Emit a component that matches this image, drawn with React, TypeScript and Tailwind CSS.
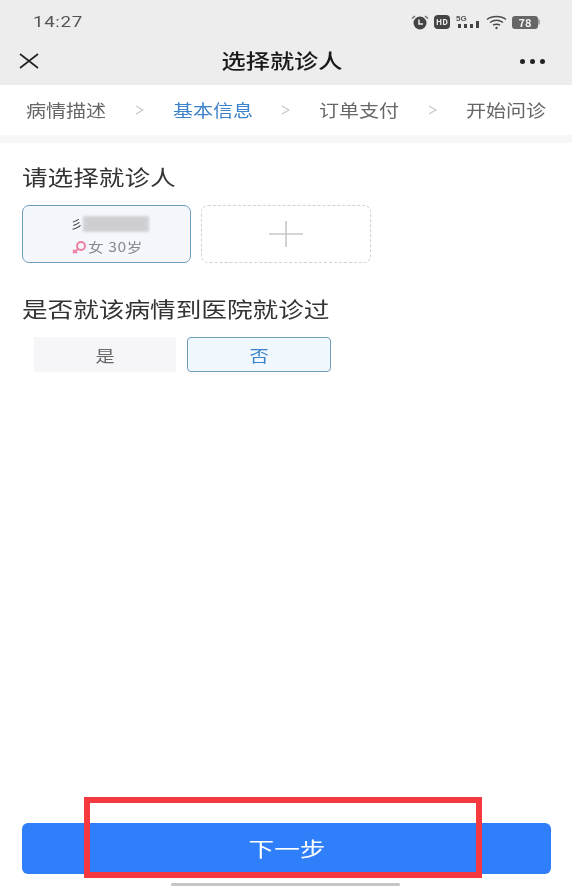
import React from 'react'

const font = { fontFamily: '"Noto Sans CJK SC", "Liberation Sans", sans-serif' }

const steps = ['病情描述', '基本信息', '订单支付', '开始问诊']

function StatusIcons() {
  return (
    <div className="flex items-center text-[#4a4a4a]">
      <svg width="18" height="15" viewBox="0 0 18 15" className="mr-[5px]">
        <circle cx="9" cy="8" r="6.5" fill="#444" />
        <path d="M1 3.5 L4 1 M17 3.5 L14 1" stroke="#666" strokeWidth="1.3" />
        <path d="M8 4.5 V9 H12" stroke="#eee" strokeWidth="1.5" fill="none" />
      </svg>
      <div className="mr-[6px] flex h-[14px] w-[16px] items-center justify-center rounded-[4px] bg-[#444] text-[8px] leading-none font-bold text-[#eee]">
        HD
      </div>
      <svg width="24" height="16" viewBox="0 0 24 16" className="mr-[6px]">
        <text x="0" y="7" fontSize="8" fontWeight="700" fill="#555" fontFamily="Liberation Sans">5G</text>
        <rect x="2" y="10" width="3" height="4" fill="#444" />
        <rect x="8" y="10" width="3" height="4" fill="#444" />
        <rect x="14" y="10" width="3" height="4" fill="#444" />
        <rect x="20" y="7" width="3" height="7" fill="#444" />
      </svg>
      <svg width="21" height="15" viewBox="0 0 21 15" className="mr-[5px]" fill="none" stroke="#4a4a4a" strokeWidth="1.5">
        <path d="M1 4.5 C6 0.5 15 0.5 20 4.5" />
        <path d="M4 7.5 C8 4.8 13 4.8 17 7.5" />
        <path d="M7 10.2 C9 9 12 9 14 10.2" />
        <circle cx="10.5" cy="13" r="1.2" fill="#4a4a4a" stroke="none" />
      </svg>
      <div className="flex items-center">
        <div className="flex h-[13px] w-[26px] items-center justify-center rounded-[3px] bg-[#666] text-[11px] leading-none font-bold text-[#f2f2f2]">
          78
        </div>
        <div className="h-[6px] w-[2px] rounded-r-sm bg-[#aaa]" />
      </div>
    </div>
  )
}

export default function App() {
  return (
    <div className="relative flex h-[887px] w-[572px] flex-col overflow-hidden bg-white blur-[0.5px]" style={font}>
      {/* top bar */}
      <div className="h-[85px] shrink-0 bg-[#ededed]">
        <div className="flex h-[44px] items-center justify-between pr-[32px] pl-[33px]">
          <span className="origin-left scale-x-[1.25] pt-[1px] text-[15px] tracking-[0.5px] text-[#555]" style={{ fontFamily: 'Roboto, sans-serif' }}>14:27</span>
          <StatusIcons />
        </div>
        <div className="flex h-[34px] items-center justify-between pr-[27px] pl-[19px]">
          <svg width="20" height="16" viewBox="0 0 20 16" fill="none" stroke="#222" strokeWidth="1.6">
            <path d="M1 1 L19 15 M19 1 L1 15" />
          </svg>
          <span className="ml-[4px] scale-x-[1.21] text-[20px] font-medium text-[#1a1a1a]">选择就诊人</span>
          <div className="flex gap-[5px]">
            <span className="h-[5px] w-[5px] rounded-full bg-[#222]" />
            <span className="h-[5px] w-[5px] rounded-full bg-[#222]" />
            <span className="h-[5px] w-[5px] rounded-full bg-[#222]" />
          </div>
        </div>
      </div>

      {/* steps */}
      <div className="flex h-[50px] shrink-0 items-start justify-between px-[26px] pt-[11px]">
        {steps.map((s, i) => (
          <React.Fragment key={s}>
            <span className={i === 1
              ? 'flex w-[80px] scale-x-[1.18] justify-center text-[17px] leading-[28px] whitespace-nowrap text-[#3d83c9]'
              : 'flex w-[80px] scale-x-[1.18] justify-center text-[17px] leading-[28px] whitespace-nowrap text-[#666]'}>{s}</span>
            {i < 3 && (
              <svg width="9" height="28" viewBox="0 0 9 28" fill="none" stroke="#c4c4c4" strokeWidth="1.1">
                <path d="M1 10 L8 14 L1 18" />
              </svg>
            )}
          </React.Fragment>
        ))}
      </div>
      <div className="h-[8px] shrink-0 bg-[#f7f7f7]" />

      {/* patient */}
      <div className="flex grow flex-col px-[22px]">
        <h2 className="mt-[19px] origin-left scale-x-[1.22] text-[21px] leading-[28px] font-normal text-[#333]">请选择就诊人</h2>
        <div className="mt-[15px] flex gap-[10px]">
          <div className="flex h-[58px] w-[169px] flex-col items-center rounded-[7px] border border-[#6f9dbf] bg-[#f4f8fd] pt-[8px]">
            <div className="ml-[6px] flex h-[20px] items-center">
              <span className="text-[12px] leading-[20px] text-[#333]">彡</span>
              <div className="h-[16px] w-[66px] bg-[#cfcfd2] blur-[1.5px]" />
            </div>
            <div className="mt-[4px] mr-[8px] flex items-center gap-[1px]">
              <svg width="16" height="14" viewBox="0 0 16 14" fill="none" stroke="#ee7fa0" strokeWidth="2">
                <circle cx="10" cy="6" r="4" />
                <path d="M7 9 L2 13 M2 10 L6 13" />
              </svg>
              <span className="origin-left scale-x-[1.2] text-[13px] leading-[18px] tracking-[0.5px] text-[#888]">女 30岁</span>
            </div>
          </div>
          <div className="flex h-[58px] w-[170px] items-center justify-center rounded-[7px] border border-dashed border-[#d2d2d2]">
            <svg width="34" height="26" viewBox="0 0 34 26" fill="none" stroke="#c8c8c8" strokeWidth="1.6">
              <path d="M0 13 H34 M17 0 V26" />
            </svg>
          </div>
        </div>

        {/* visited hospital */}
        <h2 className="mt-[31px] origin-left scale-x-[1.22] text-[21px] leading-[28px] font-normal whitespace-nowrap text-[#333]">是否就该病情到医院就诊过</h2>
        <div className="mt-[15px] flex gap-[11px] pl-[12px]">
          <div className="flex h-[35px] w-[142px] items-center justify-center bg-[#f6f6f9] text-[#666]">
            <span className="scale-x-[1.2] text-[16px]">是</span>
          </div>
          <div className="flex h-[35px] w-[144px] items-center justify-center rounded-[4px] border border-[#6f9dbf] bg-[#f1f8fd] text-[#3d83c9]">
            <span className="scale-x-[1.2] text-[16px]">否</span>
          </div>
        </div>

        <button className="mt-auto mb-[13px] flex h-[51px] w-[529px] items-center justify-center rounded-[6px] bg-[#2f7ffb] text-white">
          <span className="scale-x-[1.28] text-[20px]">下一步</span>
        </button>
      </div>

      {/* home bar */}
      <div className="absolute bottom-[1px] left-[171px] h-[3px] w-[229px] rounded-full bg-[#c4c6c8]" />
      {/* red annotation box */}
      <div className="absolute top-[797px] left-[84px] h-[81px] w-[398px] border-[6px] border-[#f5393f]" />
    </div>
  )
}
